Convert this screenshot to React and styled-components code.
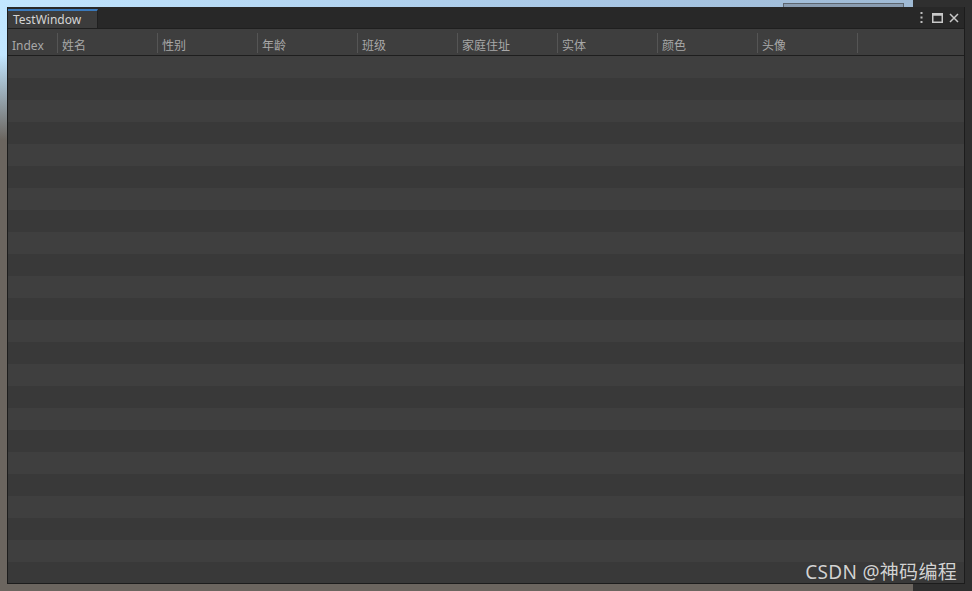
import React from "react";
import styled, { createGlobalStyle } from "styled-components";

const Global = createGlobalStyle`
  html, body { margin: 0; padding: 0; width: 972px; height: 591px; overflow: hidden; }
  body { font-family: "Noto Sans", "Noto Sans CJK SC", sans-serif; }
`;

const Desktop = styled.div`
  position: relative;
  width: 972px;
  height: 591px;
  box-sizing: border-box;
  padding: 7px 7px 7px 7px;
  background:
    linear-gradient(#2f2f2f, #2f2f2f) right top / 59px 100% no-repeat,
    linear-gradient(to bottom, rgba(0,0,0,0) 0, rgba(0,0,0,0) 55px, #6b655f 140px),
    linear-gradient(to right, #c2e6ff 0%, #a9c8e6 60%, #9eb8d2 100%);
`;

const BackdropBox = styled.div`
  position: absolute;
  left: 783px;
  top: 3px;
  width: 119px;
  height: 4px;
  border: 1px solid #5d6670;
  border-bottom: none;
  background: #8a9db2;
`;

const Window = styled.div`
  position: relative;
  display: flex;
  flex-direction: column;
  width: 958px;
  height: 577px;
  box-sizing: border-box;
  background: #383838;
  border-left: 1px solid #1c1c1c;
  border-right: 1px solid #1c1c1c;
  border-bottom: 1px solid #1c1c1c;
  overflow: hidden;
`;

const TabStrip = styled.div`
  display: flex;
  align-items: flex-end;
  height: 21px;
  background: #282828;
  border-bottom: 1px solid #1f1f1f;
  flex-shrink: 0;
`;

const Tab = styled.div`
  display: flex;
  align-items: center;
  box-sizing: border-box;
  width: 90px;
  height: 19px;
  padding-left: 5px;
  background: #3c3c3c;
  border-top: 2px solid #3a79bb;
  border-right: 1px solid #202020;
  color: #d4d4d4;
  font-size: 12px;
  line-height: 1;
`;

const TabTools = styled.div`
  margin-left: auto;
  display: flex;
  align-items: center;
  height: 21px;
  padding-right: 5px;
  color: #c4c4c4;
`;

const ToolButton = styled.span`
  display: flex;
  align-items: center;
  margin-left: ${(p) => p.$gap}px;
`;

const Header = styled.div`
  display: flex;
  height: 26px;
  background: #3e3e3e;
  border-bottom: 1px solid #1e1e1e;
  flex-shrink: 0;
`;

const HeaderCell = styled.div`
  box-sizing: border-box;
  width: ${(p) => p.$w}px;
  margin: 4px 0 2px 0;
  padding: 5px 0 0 4px;
  color: #a8a8a8;
  font-size: 12px;
  line-height: 16px;
  white-space: nowrap;
  border-right: 1px solid #555555;
`;

const Rows = styled.div`
  display: flex;
  flex-direction: column;
  flex: 1;
`;

const Row = styled.div`
  height: 22px;
  flex-shrink: 0;
  background: ${(p) => (p.$odd ? "#393939" : "#3f3f3f")};
`;

const Watermark = styled.div`
  position: absolute;
  right: 15px;
  bottom: 6px;
  color: rgba(235, 235, 235, 0.88);
  font-size: 19px;
  font-family: "Noto Sans", "Noto Sans CJK SC", sans-serif;
  letter-spacing: 0.3px;
  text-shadow: 0 0 1px rgba(0,0,0,0.3);
`;

const columns = [
  { label: "Index", w: 50 },
  { label: "姓名", w: 100 },
  { label: "性别", w: 100 },
  { label: "年龄", w: 100 },
  { label: "班级", w: 100 },
  { label: "家庭住址", w: 100 },
  { label: "实体", w: 100 },
  { label: "颜色", w: 100 },
  { label: "头像", w: 100 },
];

const Kebab = () => (
  <svg width="3" height="11" viewBox="0 0 3 11">
    <rect x="0.5" y="0" width="2" height="2" fill="#bdbdbd" />
    <rect x="0.5" y="4.5" width="2" height="2" fill="#bdbdbd" />
    <rect x="0.5" y="9" width="2" height="2" fill="#bdbdbd" />
  </svg>
);

const Maximize = () => (
  <svg width="11" height="10" viewBox="0 0 11 10">
    <rect x="0.75" y="0.75" width="9.5" height="8.5" fill="none" stroke="#c8c8c8" strokeWidth="1.5" />
    <rect x="0.75" y="0.75" width="9.5" height="2" fill="#c8c8c8" />
  </svg>
);

const Close = () => (
  <svg width="10" height="10" viewBox="0 0 10 10">
    <path d="M1 1 L9 9 M9 1 L1 9" stroke="#c8c8c8" strokeWidth="1.5" />
  </svg>
);

export default function App() {
  return (
    <Desktop>
      <Global />
      <BackdropBox />
      <Window>
        <TabStrip>
          <Tab>TestWindow</Tab>
          <TabTools>
            <ToolButton $gap={0}><Kebab /></ToolButton>
            <ToolButton $gap={9}><Maximize /></ToolButton>
            <ToolButton $gap={6}><Close /></ToolButton>
          </TabTools>
        </TabStrip>
        <Header>
          {columns.map((c) => (
            <HeaderCell key={c.label} $w={c.w}>
              {c.label}
            </HeaderCell>
          ))}
        </Header>
        <Rows>
          {Array.from({ length: 24 }).map((_, i) => (
            <Row key={i} $odd={i % 2 === 1} />
          ))}
        </Rows>
      </Window>
      <Watermark>CSDN @神码编程</Watermark>
    </Desktop>
  );
}
